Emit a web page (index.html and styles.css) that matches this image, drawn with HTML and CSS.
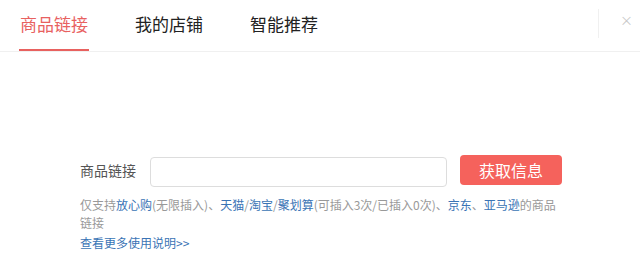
FILE: index.html
```html
<!DOCTYPE html>
<html lang="zh-CN">
  <head>
    <meta charset="UTF-8" />
    <meta name="viewport" content="width=device-width, initial-scale=1.0" />
    <title>商品链接</title>
    <link rel="stylesheet" href="styles.css">
  </head>
  <body>
    <div class="header">
      <div class="tab active">商品链接</div>
      <div class="tab">我的店铺</div>
      <div class="tab">智能推荐</div>
      <div class="divider"></div>
      <div class="close">&times;</div>
    </div>
    <div class="main">
      <div class="form-row">
        <label class="label">商品链接</label>
        <input class="link-input" type="text" />
        <button class="btn">获取信息</button>
      </div>
      <p class="tips">仅支持<a>放心购</a>(无限插入)、<a>天猫</a>/<a>淘宝</a>/<a>聚划算</a>(可插入3次/已插入0次)、<a>京东</a>、<a>亚马逊</a>的商品链接</p>
      <p class="more"><a>查看更多使用说明&gt;&gt;</a></p>
    </div>
  </body>
</html>
```
FILE: styles.css
```css
* {
  margin: 0;
  padding: 0;
  box-sizing: border-box;
}
body {
  font-family: "Noto Sans CJK SC", "Liberation Sans", sans-serif;
  background: #fff;
  color: #333;
}

.header {
  display: flex;
  height: 52px;
  padding-left: 19px;
  border-bottom: 1px solid #f0f0f0;
}
.tab {
  height: 51px;
  line-height: 47px;
  font-size: 17px;
  color: #222;
  margin-right: 45px;
  padding: 0 1px;
  border-bottom: 2px solid transparent;
}
.tab.active {
  color: #e8615f;
  border-bottom-color: #e8615f;
}
.divider {
  margin-left: auto;
  margin-top: 9px;
  width: 1px;
  height: 29px;
  background: #f0f0f0;
}
.close {
  margin: 11px 7px 0 21px;
  font-size: 13px;
  line-height: 18px;
  color: #c8c8c8;
}

.main {
  padding: 102px 0 0 80px;
}
.form-row {
  display: flex;
  align-items: flex-start;
}
.label {
  font-size: 14px;
  line-height: 30px;
  color: #555;
  margin-top: 1px;
}
.link-input {
  width: 297px;
  height: 30px;
  margin: 3px 0 0 14px;
  border: 1px solid #ddd;
  border-radius: 4px;
  outline: none;
}
.btn {
  width: 102px;
  height: 30px;
  margin-left: 13px;
  margin-top: 1px;
  border: none;
  border-radius: 4px;
  background: #f5625c;
  color: #fff;
  font-family: inherit;
  font-size: 16px;
}
.tips {
  width: 484px;
  margin-top: 9px;
  font-size: 12px;
  line-height: 18px;
  color: #999;
}
.tips a,
.more a {
  color: #3a74b5;
}
.more {
  margin-top: 2px;
  font-size: 12px;
  line-height: 18px;
}
```
